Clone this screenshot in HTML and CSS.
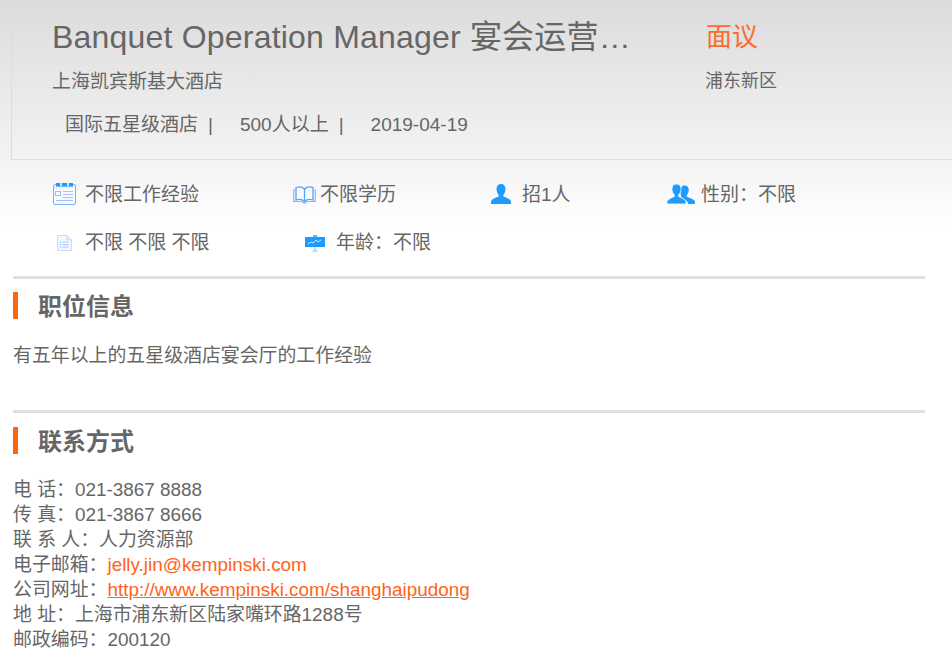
FILE: index.html
```html
<!DOCTYPE html>
<html lang="en">
<head>
    <meta charset="UTF-8">
    <meta name="viewport" content="width=device-width, initial-scale=1.0">
    <title>Banquet Operation Manager</title>
    <link rel="stylesheet" href="styles.css">
</head>
<body>

<div class="top">
    <div class="job-head">
        <div class="head-row">
            <h1 class="job-title">Banquet Operation Manager 宴会运营…</h1>
            <div class="salary">面议</div>
        </div>
        <div class="head-row sub-row">
            <div class="company">上海凯宾斯基大酒店</div>
            <div class="area">浦东新区</div>
        </div>
        <div class="meta">
            <span class="meta-type">国际五星级酒店</span><span class="meta-sep">|</span><span class="meta-size">500人以上</span><span class="meta-sep">|</span><span class="meta-date">2019-04-19</span>
        </div>
    </div>

    <div class="stats">
        <div class="stat stat-exp">
            <svg class="icon" width="23" height="22" viewBox="0 0 23 22">
                <rect x="0.500" y="1.500" width="22" height="20" rx="1.500" fill="#f6faff" stroke="#6fb6ff"/>
                <rect x="3" y="0" width="17" height="4" fill="#1e9bff"/>
                <path d="M8 0v3M15 0v3" stroke="#ffffff" stroke-width="1.500"/>
                <path d="M1 4h21" stroke="#cfe6ff"/>
                <rect x="2.500" y="8.500" width="5" height="4" fill="none" stroke="#8cc4fb"/>
                <path d="M10 8.500h10M10 11.500h10M10 14.500h10M3 17.500h17" stroke="#aebcf8"/>
            </svg>
            <span>不限工作经验</span>
        </div>
        <div class="stat stat-edu">
            <svg class="icon" width="23" height="18" viewBox="0 0 23 18">
                <path d="M11.500 3C9.500 1 6 0.500 3 1.500V14c3-1 6.500-.5 8.500 1.500 2-2 5.500-2.500 8.500-1.500V1.500C17 0.500 13.500 1 11.500 3zM11.500 3v12.500" fill="none" stroke="#4fa5ff" stroke-width="1.300"/>
                <path d="M3 4H0.700v11.500H9l2.500 2 2.500-2h8.300V4H20" fill="none" stroke="#7dbaff" stroke-width="1.200"/>
            </svg>
            <span>不限学历</span>
        </div>
        <div class="stat stat-num">
            <svg class="icon" width="20" height="20" viewBox="0 0 20 20">
                <path d="M10 0c3 0 4.500 2 4.500 5 0 2.300-.9 4.500-2.100 5.700v1.800c1.800 1 7 2.200 7.600 5V20H0v-2.500c.6-2.800 5.800-4 7.600-5v-1.800C6.400 9.500 5.500 7.300 5.500 5 5.500 2 7 0 10 0z" fill="#1e9bff"/>
            </svg>
            <span>招1人</span>
        </div>
        <div class="stat stat-sex">
            <svg class="icon" width="28" height="20" viewBox="0 0 28 20">
                <path d="M17.500 1.500c2.800 0 4.300 1.900 4.300 4.600 0 2-1 3.900-2 5v1.600c1.600.9 7.200 2 8.200 4.800V20h-6.800c-.3-3-3.800-4.900-7-6.400v-2.200c-.6-1-.8-3-.8-4.700 0-2.500 1.300-5.200 4.100-5.200z" fill="#1e9bff"/>
                <path d="M9.500 0c2.900 0 4.600 2 4.600 4.900 0 2.300-1 4.500-2.300 5.700v1.900c1.800 1 6.300 2.500 7.200 5V20H0v-2.500c.9-2.500 5.400-4 7.200-5v-1.900C5.900 9.400 4.900 7.200 4.900 4.900 4.900 2 6.600 0 9.500 0z" fill="#1e9bff" stroke="#ffffff" stroke-width="0.800"/>
            </svg>
            <span>性别：不限</span>
        </div>
    </div>

    <div class="stats stats-second">
        <div class="stat stat-lang">
            <svg class="icon" width="15" height="16" viewBox="0 0 15 16">
                <path d="M0.500 0.500H10L14.500 5v10.500H0.500z" fill="#f3f7ff" stroke="#c9dafc"/>
                <path d="M10 0.500V5h4.500" fill="#dfe8fd" stroke="#c9dafc"/>
                <path d="M5.500 7h6M5.500 9.500h6M5.500 12h6" stroke="#a9c4fa"/>
                <path d="M3 7h1M3 9.500h1M3 12h1" stroke="#4fa3fb"/>
            </svg>
            <span>不限 不限 不限</span>
        </div>
        <div class="stat stat-age">
            <svg class="icon" width="20" height="17" viewBox="0 0 20 17">
                <rect x="0" y="2" width="20" height="10" fill="#1e9bff"/>
                <rect x="8" y="0" width="4" height="2" fill="#5eb6fb"/>
                <path d="M3 9l3-2 2 1 3-3 2 2 3-2" fill="none" stroke="#ffffff" stroke-width="0.800"/>
                <path d="M10 12v4M7.500 16h5" stroke="#7cc0fa"/>
            </svg>
            <span>年龄：不限</span>
        </div>
    </div>
</div>

<div class="section section-info">
    <h2 class="section-title">职位信息</h2>
    <p class="info-text">有五年以上的五星级酒店宴会厅的工作经验</p>
</div>

<div class="section section-contact">
    <h2 class="section-title">联系方式</h2>
    <ul class="contact">
        <li>电 话：021-3867 8888</li>
        <li>传 真：021-3867 8666</li>
        <li>联 系 人：人力资源部</li>
        <li>电子邮箱：<span class="orange">jelly.jin@kempinski.com</span></li>
        <li>公司网址：<a class="orange" href="#">http://www.kempinski.com/shanghaipudong</a></li>
        <li>地 址：上海市浦东新区陆家嘴环路1288号</li>
        <li>邮政编码：200120</li>
    </ul>
</div>

</body>
</html>
```

FILE: styles.css
```css
body {
    margin: 0;
    font-family: "Liberation Sans", "Noto Sans CJK SC", sans-serif;
    font-size: 19px;
    color: #666;
    background-color: #fff;
}

.top {
    height: 276px;
    overflow: hidden;
    background: linear-gradient(to bottom, #dcdcdc 0, #f4f4f4 165px, #fff 225px);
}

.job-head {
    height: 159px;
    margin-left: 11px;
    padding-left: 40px;
    border-left: 1px solid #ddd;
    border-bottom: 1px solid #ddd;
}

.head-row {
    display: flex;
    align-items: center;
}

.job-title {
    width: 581px;
    height: 37px;
    margin: 19px 73px 0 0;
    font-size: 32px;
    font-weight: normal;
    line-height: 37px;
    letter-spacing: 0.2px;
    white-space: nowrap;
}

.salary {
    margin-top: 19px;
    font-size: 26px;
    line-height: 37px;
    color: #ff6a2f;
}

.sub-row {
    margin-top: 12px;
    height: 26px;
}

.company {
    width: 653px;
    margin-top: 2px;
    line-height: 26px;
}

.area {
    font-size: 18px;
    line-height: 26px;
}

.meta {
    display: flex;
    margin-top: 18px;
    margin-left: 13px;
    font-size: 19px;
    line-height: 26px;
}

.meta-sep {
    margin-left: 10px;
}

.meta-size {
    margin-left: 27px;
}

.meta-date {
    margin-left: 27px;
}

.stats {
    display: flex;
    margin-left: 53px;
    margin-top: 22px;
    height: 26px;
}

.stat {
    display: flex;
    align-items: center;
    flex: none;
    white-space: nowrap;
    line-height: 26px;
}

.stat-exp {
    width: 240px;
}

.stat-exp .icon {
    margin-right: 9px;
    margin-bottom: 3px;
}

.stat-edu {
    width: 198px;
}

.stat-edu .icon {
    margin-right: 4px;
}

.stat-num {
    width: 176px;
}

.stat-num .icon {
    margin-right: 11px;
    margin-bottom: 3px;
}

.stat-sex .icon {
    margin-right: 6px;
    margin-bottom: 3px;
}

.stat-lang {
    width: 252px;
    padding-left: 4px;
    box-sizing: border-box;
}

.stat-lang .icon {
    margin-right: 13px;
}

.stat-age .icon {
    margin-right: 11px;
}

.section {
    margin: 0 27px 0 13px;
    border-top: 3px solid #e0e0e0;
}

.section-info {
    height: 131px;
}

.section-title {
    margin: 13px 0 0;
    padding-left: 20px;
    height: 27px;
    border-left: 5px solid #ff6410;
    font-size: 24px;
    font-weight: bold;
    line-height: 29px;
}

.section-contact .section-title {
    margin-top: 14px;
}

.info-text {
    margin: 24px 0 0;
    font-size: 18.9px;
    line-height: 26px;
}

.contact {
    list-style: none;
    margin: 23px 0 0;
    padding: 0;
    font-size: 18.9px;
    line-height: 25px;
}

.orange {
    color: #ff6319;
}

a.orange {
    text-decoration: underline;
}
```
